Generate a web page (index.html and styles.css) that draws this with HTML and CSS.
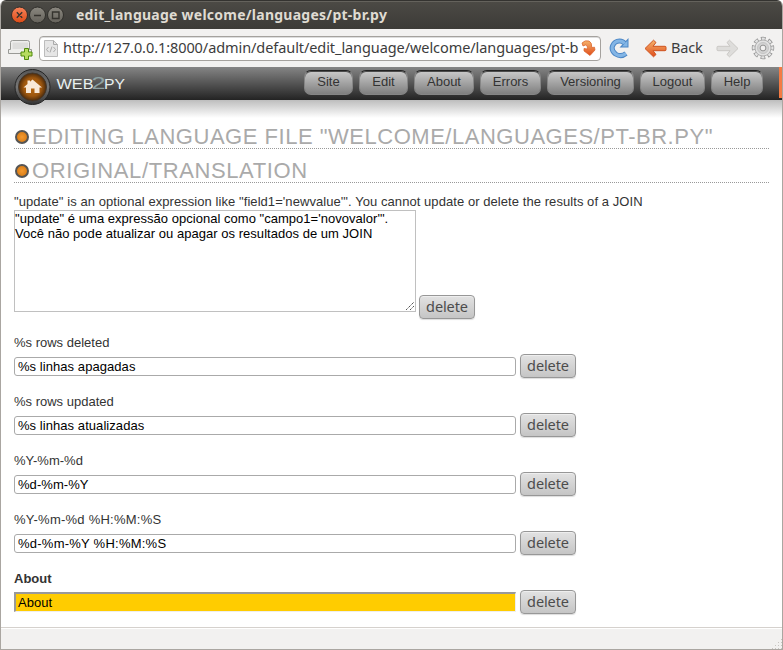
FILE: index.html
```
<!DOCTYPE html>
<html lang="en">
<head>
<meta charset="utf-8">
<title>edit_language welcome/languages/pt-br.py</title>
<link rel="stylesheet" href="styles.css">
</head>
<body>
<div class="window">
  <header class="titlebar">
    <svg width="56" height="18" viewBox="0 0 56 18">
      <defs>
        <linearGradient id="close" x2="0" y2="1"><stop stop-color="#f8845b"/><stop offset="1" stop-color="#dc4a16"/></linearGradient>
        <linearGradient id="ctl" x2="0" y2="1"><stop stop-color="#8a877f"/><stop offset="1" stop-color="#65625b"/></linearGradient>
      </defs>
      <g stroke="#2f2e2a"><circle cx="9.500" cy="9" r="8" fill="url(#close)"/><circle cx="27.500" cy="9" r="8" fill="url(#ctl)"/><circle cx="45.500" cy="9" r="8" fill="url(#ctl)"/></g>
      <path d="M6.800 6.300l5.400 5.400M12.200 6.300l-5.400 5.400M24 9.500h7M42.500 6H49v6.500h-6.500z" fill="none" stroke="#35332e" stroke-width="1.400"/>
    </svg>
    <span class="title">edit_language welcome/languages/pt-br.py</span>
  </header>
  <div class="toolbar">
    <svg class="newtab" width="26" height="22" viewBox="0 0 26 22">
      <path d="M.5 15.500v-4h2V4.500Q2.500 2.500 4.500 2.500h15q2 0 2 2v7h2v4z" fill="#eeeeec" stroke="#999a96"/>
      <path d="M4.500 4.500h15.500v6.500H4.500z" fill="#dddddb"/>
      <path d="M16.500 10.500h4v3.500h3.500v4h-3.500v3.500h-4V18H13v-4h3.500z" fill="#b7dc61" stroke="#4f8a0c"/>
    </svg>
    <div class="address">
      <svg width="14" height="17" viewBox="0 0 14 17"><path d="M.5.5h9l4 4v12H.5z" fill="#e6e6e6" stroke="#bcbcbc"/><path d="M9.500.5v4h4M4.500 7L2.500 9.500l2 2.500M9.500 7l2 2.500-2 2.500M8 6.500l-2 6" fill="none" stroke="#aaa"/></svg>
      <span class="url">http://127.0.0.1:8000/admin/default/edit_language/welcome/languages/pt-b</span>
      <svg class="go" width="15" height="17" viewBox="0 0 15 17"><defs><linearGradient id="or" x2="0" y2="1"><stop stop-color="#f5b36c"/><stop offset="1" stop-color="#e04d1b"/></linearGradient></defs><path d="M1 3Q4-.3 8 1q3 1.300 2.800 6.500l2.700-.3L14 10l-5 5.500L3 11V8.500l3.500.5Q7 5.500 4.500 5L2 6z" fill="url(#or)" stroke="#d95f25" stroke-width=".7"/></svg>
    </div>
    <svg class="reload" width="21" height="22" viewBox="0 0 21 22"><path d="M17 16.500Q12 20.500 6.500 17 2 13.500 3.500 9 5.500 4 10.500 4q3.500 0 5 2.500" fill="none" stroke="#4b86c5" stroke-width="5"/><path d="M19.500 1v9.500h-9z" fill="#4b86c5"/><path d="M17 16.500Q12 20.500 6.500 17 2 13.500 3.500 9 5.500 4 10.500 4q3.500 0 5 2.500" fill="none" stroke="#83b5e5" stroke-width="3"/><path d="M18.500 3.500v6h-5.500z" fill="#83b5e5"/></svg>
    <svg class="back" width="23" height="19" viewBox="0 0 23 19"><path d="M1 9.500L9.500 1.200 12 3.500 9 7.300h12q1 0 1 1v2.400q0 1-1 1H9l3 3.800-2.500 2.300z" fill="url(#or)" stroke="#cf531f"/></svg>
    <span class="back-label">Back</span>
    <svg class="fwd" width="23" height="19" viewBox="0 0 23 19"><path d="M22 9.500L13.500 1.200 11 3.500l3 3.800H2q-1 0-1 1v2.400q0 1 1 1h12l-3 3.800 2.500 2.300z" fill="#dedddb" stroke="#cac8c5"/></svg>
    <svg class="gear" width="24" height="24" viewBox="0 0 24 24"><circle cx="12" cy="12" r="9.500" fill="none" stroke="#929292" stroke-width="3.400" stroke-dasharray="4.600 2.861" transform="rotate(-14 12 12)"/><circle cx="12" cy="12" r="9.300" fill="none" stroke="#e4e4e4" stroke-width="2.400" stroke-dasharray="3 4.304" transform="rotate(-9.200 12 12)"/><circle cx="12" cy="12" r="8" fill="#e2e2e2" stroke="#b0b0b0"/><circle cx="12" cy="12" r="5.500" fill="#d2d2d2" stroke="#c4c4c4"/><circle cx="12" cy="12" r="2.900" fill="#f2f1f0" stroke="#929292"/></svg>
  </div>
  <div class="sitebar">
    <svg class="logo" width="130" height="38" viewBox="0 0 130 38">
      <defs><radialGradient id="home"><stop stop-color="#bd6b12"/><stop offset=".65" stop-color="#9c560f"/><stop offset="1" stop-color="#4b2a0b"/></radialGradient><linearGradient id="ring" x2="0" y2="1"><stop stop-color="#555"/><stop offset=".5" stop-color="#777"/><stop offset="1" stop-color="#333"/></linearGradient></defs>
      <circle cx="20.500" cy="20" r="17.500" fill="url(#ring)" stroke="#252525"/><circle cx="20.500" cy="20" r="14" fill="url(#home)" stroke="#44382d"/>
      <path d="M20.500 12.500l9.500 8h-2.500V26h-5v-4.500h-3.500V26h-5v-5.500H11.500l4-3.500V13.500H18v1.200z" fill="#f8e8d8"/>
      <g class="wordmark"><text x="44.500" y="22" textLength="37" lengthAdjust="spacingAndGlyphs">WEB</text><text class="two" x="79.500" y="22" textLength="14" lengthAdjust="spacingAndGlyphs">2</text><text x="92" y="22" textLength="21" lengthAdjust="spacingAndGlyphs">PY</text></g>
    </svg>
    <nav class="menu">
      <a class="w49">Site</a><a class="w49">Edit</a><a class="w60">About</a><a class="w61">Errors</a><a class="w87">Versioning</a><a class="w65">Logout</a><a class="w52">Help</a>
    </nav>
    <i class="marker"></i>
  </div>
  <main>
    <h1><i class="dot"></i><span>EDITING LANGUAGE FILE "WELCOME/LANGUAGES/PT-BR.PY"</span></h1>
    <h2><i class="dot"></i><span>ORIGINAL/TRANSLATION</span></h2>
    <p class="intro">"update" is an optional expression like "field1='newvalue'". You cannot update or delete the results of a JOIN</p>
    <div class="area-row">
      <div class="area">"update" é uma expressão opcional como "campo1='novovalor'".<br>Você não pode atualizar ou apagar os resultados de um JOIN
        <svg class="grip" width="8" height="8" viewBox="0 0 8 8"><path d="M0 8l8-8M4 8l4-4" stroke="#555" stroke-dasharray="1.500 .6"/></svg>
      </div>
      <button>delete</button>
    </div>
    <div class="entry"><label>%s rows deleted</label><div class="line"><div class="field">%s linhas apagadas</div><button>delete</button></div></div>
    <div class="entry"><label>%s rows updated</label><div class="line"><div class="field">%s linhas atualizadas</div><button>delete</button></div></div>
    <div class="entry"><label>%Y-%m-%d</label><div class="line"><div class="field">%d-%m-%Y</div><button>delete</button></div></div>
    <div class="entry"><label class="times">%Y-%m-%d %H:%M:%S</label><div class="line"><div class="field times">%d-%m-%Y %H:%M:%S</div><button>delete</button></div></div>
    <div class="entry"><label class="strong">About</label><div class="line"><div class="field missing">About</div><button>delete</button></div></div>
  </main>
  <footer><i class="resize"></i></footer>
</div>
</body>
</html>
```
FILE: styles.css
```
* { box-sizing: border-box; }
body { margin: 0; background: #fff; font: 13px/15px "Liberation Sans", sans-serif; color: #333; }
svg { display: block; flex: none; }
.window { width: 783px; height: 650px; display: flex; flex-direction: column; border: solid #aaa6a1; border-width: 0 1px 1px; border-radius: 6px 6px 0 0; overflow: hidden; }
.titlebar { height: 29px; margin: 0 -1px; flex: none; display: flex; align-items: center; padding-left: 10px; background: linear-gradient(#4c4a45, #3c3b37); border-top: 1px solid #343330; box-shadow: inset 0 1px #64625c; }
.title { margin-left: 10px; font: bold 14px/20px "Noto Sans", sans-serif; letter-spacing: .25px; color: #dfdbd2; white-space: nowrap; }
.toolbar { height: 38px; flex: none; display: flex; align-items: center; background: #f2f1f0; font: 14.500px/20px "Noto Sans", sans-serif; color: #3c3c3c; }
.newtab { margin: 2px 5px 0 7px; }
.address { width: 562px; height: 25px; display: flex; align-items: center; border: 1px solid #a5a29e; border-radius: 4px; background: #fff; box-shadow: inset 0 1px #ddd; padding-left: 4px; }
.url { width: 517px; margin: -2px 0 0 5px; white-space: nowrap; letter-spacing: -.08px; }
.go { margin-left: 1px; }
.reload { margin-left: 8px; }
.back { margin-left: 14px; }
.back-label { width: 32px; margin: -2px 0 0 4px; letter-spacing: -.2px; }
.fwd { margin-left: 13px; }
.gear { margin-left: 12px; }
.sitebar { height: 33px; flex: none; display: flex; position: relative; background: linear-gradient(#858585, #232323); }
.logo { margin-left: 11px; position: relative; z-index: 1; }
.wordmark { font: 14px "Liberation Sans", sans-serif; fill: #e9f0ef; }
.wordmark .two { font-size: 17px; fill: #8fa2a2; }
.menu { display: flex; gap: 6px; margin: 3px 0 0 162px; }
.menu a { height: 25px; border: 1px solid #858585; border-top: 1px solid #222; border-radius: 7px; background: linear-gradient(#cacaca, #7f7f7f); box-shadow: inset 0 1px #4c4c4c; text-align: center; line-height: 22px; color: #333; }
.w49 { width: 49px; } .w60 { width: 60px; } .w61 { width: 61px; } .w87 { width: 87px; } .w65 { width: 65px; } .w52 { width: 52px; }
.marker { position: absolute; right: 0; top: 0; width: 3px; height: 31px; background: #f47b44; }
main { flex: 1; padding: 24px 13px 0; background: linear-gradient(#bdbdbd, #fff 18px); }
h1, h2 { margin: 0 0 9px; height: 25px; display: flex; align-items: center; border-bottom: 1px dotted #999; font: 22px/24px "Liberation Sans", sans-serif; letter-spacing: .52px; color: #aaa; white-space: nowrap; }
h1 span, h2 span { padding-top: 2px; }
h2 { letter-spacing: .6px; }
.dot { width: 14px; height: 14px; margin: 1px 3px 0 1px; border: 2px solid #555; border-radius: 50%; background: radial-gradient(#f59a30, #cf7410); }
.intro { margin: 11px 0 1px; white-space: nowrap; letter-spacing: .065px; }
.area-row { display: flex; gap: 3px; align-items: flex-end; height: 109px; }
.area { width: 402px; height: 102px; margin-bottom: 7px; position: relative; border: 1px solid #c0c0c0; background: #fff; color: #000; white-space: nowrap; letter-spacing: .03px; }
.grip { position: absolute; right: 1px; bottom: 1px; }
button { width: 56px; height: 24px; padding: 0 0 2px; flex: none; border: 1px solid #979797; border-radius: 4px; background: linear-gradient(#e2e2e2, #c5c5c5); box-shadow: 0 1px 1px #ddd, inset 0 1px #eee; font: 14.500px/20px "Noto Sans", sans-serif; letter-spacing: -.1px; color: #4c4c4c; }
.entry { height: 59px; padding-top: 16px; }
label { display: block; height: 19px; }
.strong { font-weight: bold; }
.line { display: flex; align-items: center; gap: 4px; }
.field { width: 502px; height: 19px; padding-left: 3px; border: 1px solid #aaa; border-radius: 3px; background: #fff; color: #000; line-height: 18px; letter-spacing: .06px; }
.times { letter-spacing: .24px; }
.missing { border: solid; border-width: 2px 1px 1px 2px; border-color: #999 #eee #eee #999; border-radius: 0; background: #fc0; padding-left: 2px; height: 20px; }
footer { height: 22px; flex: none; position: relative; background: #f2f1f0; border-top: 1px solid #d5d1cd; box-shadow: inset 0 1px #fff; }
.resize { position: absolute; right: 0; bottom: 0; width: 11px; height: 11px; background: radial-gradient(#c8c5c1 1px, transparent 1px) 0 0 / 3px 3px; clip-path: polygon(100% 0, 100% 100%, 0 100%); }
```
